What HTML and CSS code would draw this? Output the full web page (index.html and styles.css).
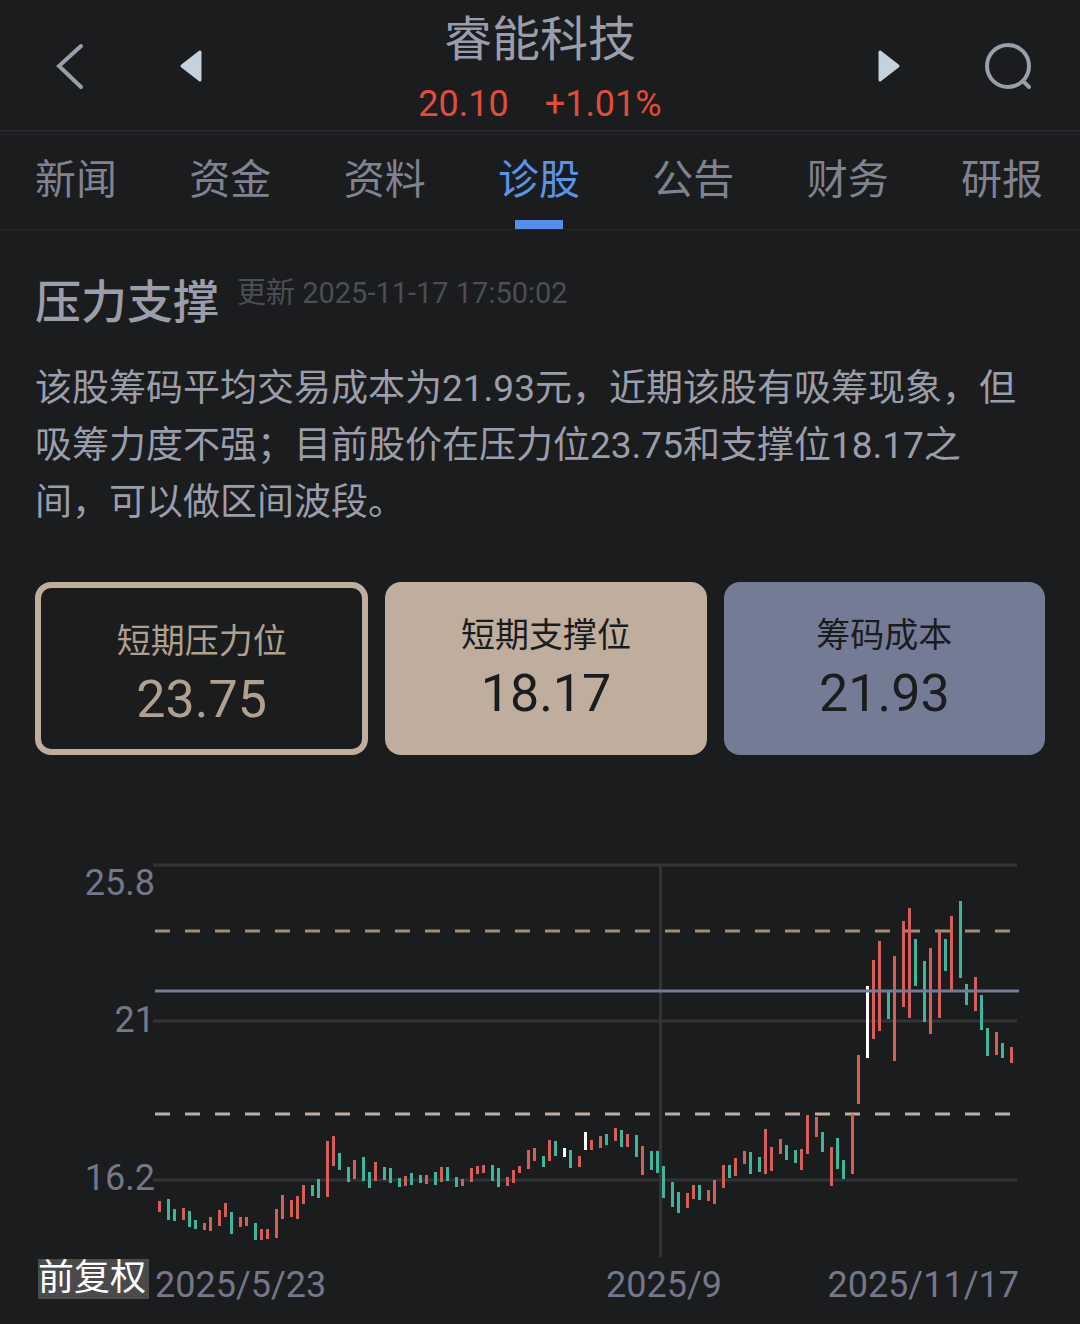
FILE: index.html
```html
<!DOCTYPE html>
<html lang="zh-CN">
<head>
    <meta charset="UTF-8">
    <meta name="viewport" content="width=device-width, initial-scale=1.0">
    <title>睿能科技 - 诊股</title>
    <link rel="stylesheet" href="styles.css">
</head>
<body>
    <header class="topbar">
        <button type="button" class="icon-btn" aria-label="返回">
            <svg width="30" height="50" viewBox="0 0 30 50"><path class="line-icon" d="M26 5 L4 25 L26 46"/></svg>
        </button>
        <button type="button" class="icon-btn" aria-label="上一只">
            <svg width="24" height="34" viewBox="0 0 24 34"><path class="solid-icon" d="M21 3 V31 L3 17 Z"/></svg>
        </button>
        <div class="stock">
            <h1>睿能科技</h1>
            <div class="quote"><span>20.10</span><span>+1.01%</span></div>
        </div>
        <button type="button" class="icon-btn" aria-label="下一只">
            <svg width="24" height="34" viewBox="0 0 24 34"><path class="solid-icon" d="M3 3 V31 L21 17 Z"/></svg>
        </button>
        <button type="button" class="icon-btn" aria-label="搜索">
            <svg width="50" height="50" viewBox="0 0 50 50"><circle class="line-icon" cx="25" cy="25" r="21"/><path class="line-icon" d="M40 40 L46 46"/></svg>
        </button>
    </header>

    <nav class="tabs">
        <a href="#news">新闻</a>
        <a href="#funds">资金</a>
        <a href="#profile">资料</a>
        <a href="#diagnosis" class="active">诊股</a>
        <a href="#notice">公告</a>
        <a href="#finance">财务</a>
        <a href="#report">研报</a>
    </nav>

    <main>
        <section class="summary">
            <div class="heading">
                <h2>压力支撑</h2>
                <span class="updated">更新 2025-11-17 17:50:02</span>
            </div>
            <p>该股筹码平均交易成本为21.93元，近期该股有吸筹现象，但吸筹力度不强；目前股价在压力位23.75和支撑位18.17之间，可以做区间波段。</p>
            <div class="cards">
                <div class="card outlined"><span>短期压力位</span><strong>23.75</strong></div>
                <div class="card support"><span>短期支撑位</span><strong>18.17</strong></div>
                <div class="card cost"><span>筹码成本</span><strong>21.93</strong></div>
            </div>
        </section>

        <svg class="chart" viewBox="0 850 1080 474" role="img" aria-label="股价走势">
            <!-- grid -->
            <path class="grid" d="M153 865H1017 M153 1021H1017 M153 1180H1017 M660.5 865V1257"/>
            <!-- pressure and support levels -->
            <path class="level pressure" d="M155 931H1018"/>
            <path class="level floor" d="M155 1114H1018"/>
            <!-- daily ranges -->
            <path class="bar up" d="M159.5 1201V1212 M183.5 1208V1220 M204.5 1223V1230 M210.5 1217V1231 M219.5 1210V1226 M225.5 1203V1217 M240.5 1217V1227 M246.5 1217V1226 M261.5 1229V1240 M267.5 1229V1239 M276.5 1209V1238 M282.5 1195V1219 M291.5 1200V1217 M297.5 1196V1219 M303.5 1185V1204 M327.5 1141V1197 M333.5 1136V1166
                M354.5 1160V1179 M375.5 1162V1181 M405.5 1176V1186 M426.5 1175V1184 M441.5 1167V1182 M462.5 1179V1186 M471.5 1168V1182 M477.5 1166V1174 M483.5 1165V1173 M507.5 1177V1186 M513.5 1170V1183 M519.5 1166V1173 M528.5 1150V1169 M534.5 1148V1161 M549.5 1140V1161 M579.5 1156V1167 M591.5 1140V1150 M600.5 1136V1148
                M615.5 1128V1141 M627.5 1134V1147 M642.5 1146V1175 M687.5 1193V1208 M693.5 1185V1199 M708.5 1190V1201 M714.5 1180V1204 M723.5 1165V1188 M735.5 1158V1176 M744.5 1151V1164 M765.5 1129V1174 M771.5 1147V1171 M780.5 1139V1154 M801.5 1149V1170 M807.5 1115V1154 M816.5 1117V1137 M831.5 1147V1186 M852.5 1114V1174
                M858.5 1055V1104 M873.5 960V1039 M879.5 941V1031 M894.5 956V1061 M903.5 921V1007 M909.5 908V1018 M930.5 948V1034 M939.5 931V1018 M951.5 916V992 M975.5 977V1011 M996.5 1032V1055 M1011.5 1047V1063"/>
            <path class="bar down" d="M168.5 1199V1220 M174.5 1209V1221 M189.5 1211V1227 M195.5 1220V1229 M231.5 1212V1234 M255.5 1223V1240 M312.5 1185V1196 M318.5 1179V1198 M339.5 1153V1170 M348.5 1167V1182 M363.5 1157V1181 M369.5 1172V1188 M384.5 1167V1180 M390.5 1168V1183 M399.5 1178V1187 M411.5 1173V1185 M420.5 1175V1183
                M435.5 1172V1185 M447.5 1167V1181 M456.5 1177V1187 M492.5 1165V1181 M498.5 1168V1187 M543.5 1156V1167 M555.5 1141V1156 M570.5 1150V1168 M606.5 1134V1145 M621.5 1130V1147 M636.5 1135V1157 M651.5 1151V1170 M657.5 1151V1173 M663.5 1166V1198 M672.5 1182V1207 M678.5 1192V1213 M699.5 1185V1200
                M729.5 1165V1178 M750.5 1152V1174 M759.5 1157V1172 M786.5 1145V1160 M795.5 1150V1163 M822.5 1132V1152 M837.5 1138V1169 M843.5 1160V1179 M888.5 991V1019 M915.5 939V986 M924.5 961V1022 M945.5 939V971 M960.5 901V978 M966.5 984V1005 M981.5 995V1030 M987.5 1028V1056 M1002.5 1043V1058"/>
            <path class="bar flat" d="M564.5 1148V1157 M585.5 1132V1150 M867.5 986V1058"/>
            <path class="level average" d="M155 991H1019"/>
            <!-- axis labels -->
            <g class="price-axis">
                <text x="155" y="895">25.8</text>
                <text x="155" y="1032">21</text>
                <text x="155" y="1190">16.2</text>
            </g>
            <g class="date-axis">
                <text x="155" y="1297">2025/5/23</text>
                <text x="664" y="1297" text-anchor="middle">2025/9</text>
                <text x="1019" y="1297" text-anchor="end">2025/11/17</text>
            </g>
            <rect class="adjust-box" x="38" y="1259" width="111" height="40"/>
            <text class="adjust" x="38" y="1290">前复权</text>
        </svg>
    </main>
</body>
</html>
```

FILE: styles.css
```css
body {
    margin: 0;
    background-color: #1b1c1e;
    color: #9b9dab;
    font-family: Roboto, "Noto Sans CJK SC", sans-serif;
}

h1, h2, p {
    margin: 0;
    font-weight: 400;
}

.topbar {
    display: flex;
    align-items: center;
    justify-content: space-between;
    height: 128px;
    padding: 2px 47px 0 55px;
    border-bottom: 2px solid #27282c;
}

.icon-btn {
    display: flex;
    padding: 0;
    border: none;
    background: none;
    cursor: pointer;
}

.icon-btn:nth-of-type(2) {
    margin-left: 94px;
}

.icon-btn:nth-of-type(3) {
    margin-right: 82px;
}

.line-icon {
    fill: none;
    stroke: #9b9dab;
    stroke-width: 4;
    stroke-linecap: round;
}

.solid-icon {
    fill: #c5d2de;
    stroke: #c5d2de;
    stroke-width: 3;
    stroke-linejoin: round;
}

.stock {
    flex: 1;
    text-align: center;
}

.stock h1 {
    font-size: 48px;
    line-height: 76px;
}

.quote {
    display: flex;
    justify-content: center;
    gap: 36px;
    color: #e14d3d;
    font-size: 36px;
    line-height: 52px;
}

.tabs {
    display: flex;
    justify-content: space-between;
    height: 94px;
    margin-top: 2px;
    padding: 0 37px 0 35px;
    border-top: 1px solid #27282c;
    border-bottom: 1px solid #27282c;
}

.tabs a {
    position: relative;
    color: #7f8290;
    font-size: 41px;
    line-height: 90px;
    text-decoration: none;
}

.tabs .active {
    color: #5b93e8;
}

.tabs .active::after {
    content: "";
    position: absolute;
    left: 50%;
    bottom: 0;
    width: 48px;
    height: 9px;
    margin-left: -24px;
    background-color: #568ee8;
}

.summary {
    padding: 42px 35px 0;
}

.heading {
    display: flex;
    align-items: flex-start;
    gap: 18px;
}

.heading h2 {
    font-size: 46px;
    font-weight: 500;
    line-height: 60px;
}

.updated {
    color: #4b4d57;
    font-size: 29px;
    line-height: 42px;
}

.summary p {
    padding: 28px 20px 0 0;
    font-size: 37px;
    line-height: 57px;
    text-spacing-trim: space-all;
}

.cards {
    display: flex;
    gap: 17px;
    margin-top: 51px;
}

.card {
    display: flex;
    flex: 1;
    flex-direction: column;
    align-items: center;
    padding: 28px 0 16px;
    border-radius: 16px;
    color: #1b1c1e;
}

.card span {
    font-size: 34px;
    line-height: 50px;
}

.card strong {
    font-size: 52px;
    font-weight: 400;
    line-height: 67px;
}

.outlined {
    border: 6px solid #bfae9d;
    color: #b0a08f;
}

.support {
    background-color: #bfae9d;
}

.cost {
    background-color: #747b94;
}

.chart {
    display: block;
    width: 100%;
    margin-top: 95px;
}

.grid {
    fill: none;
    stroke: #333335;
    stroke-width: 3;
}

.level {
    stroke-width: 3;
}

.pressure {
    stroke: #a28b77;
    stroke-dasharray: 15 15;
}

.floor {
    stroke: #bfae9d;
    stroke-dasharray: 15 15;
}

.average {
    stroke: #747b94;
}

.bar {
    fill: none;
    stroke-width: 3;
}

.up {
    stroke: #d55f58;
}

.down {
    stroke: #3fb59b;
}

.flat {
    stroke: #ffffff;
}

.price-axis, .date-axis {
    fill: #757789;
    font-size: 36px;
}

.price-axis {
    text-anchor: end;
}

.adjust-box {
    fill: #4a4a4a;
}

.adjust {
    fill: #ffffff;
    font-size: 36px;
}
```
